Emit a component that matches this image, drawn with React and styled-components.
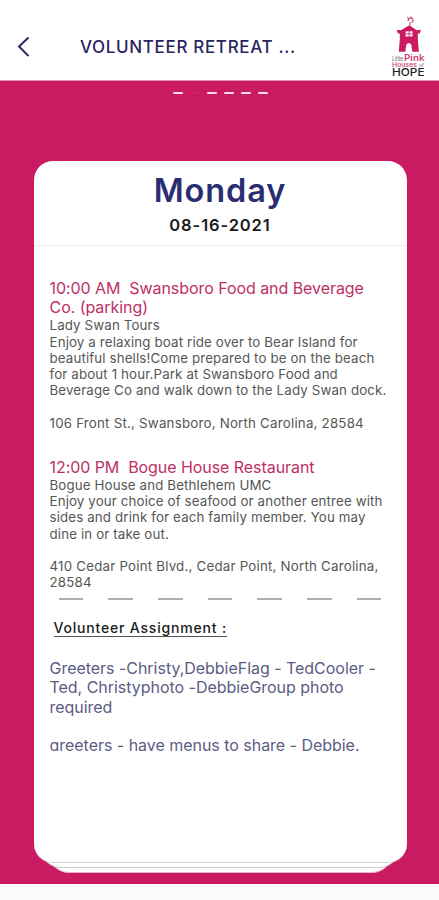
import React from "react";
import styled, { createGlobalStyle } from "styled-components";

const GlobalStyle = createGlobalStyle`
  * { box-sizing: border-box; }
  body { margin: 0; background: #fbfbfb; font-family: Inter, "Liberation Sans", sans-serif; }
`;

const Screen = styled.div`
  width: 439px;
  height: 900px;
  display: flex;
  flex-direction: column;
  overflow: hidden;
  background: #fbfbfb;
`;

const Header = styled.header`
  flex: none;
  height: 81px;
  display: flex;
  align-items: flex-start;
  background: #fff;
  border-bottom: 1px solid #d79bb4;
`;

const BackButton = styled.button`
  flex: none;
  width: 80px;
  height: 30px;
  margin-top: 32px;
  padding: 0 0 0 17px;
  border: 0;
  background: none;
  text-align: left;
  svg { display: block; }
`;

const Title = styled.h1`
  flex: 1;
  margin: 36px 0 0;
  font-size: 17px;
  line-height: 22px;
  font-weight: 500;
  letter-spacing: 0.66px;
  color: #29265f;
  white-space: nowrap;
`;

const Logo = styled.svg`
  flex: none;
  width: 37px;
  height: 64px;
  margin: 14px 10px 0 0;
`;

const Stage = styled.main`
  flex: none;
  height: 803px;
  display: flex;
  flex-direction: column;
  align-items: center;
  background: #ca1b62;
`;

const Pager = styled.div`
  display: flex;
  gap: 7px;
  height: 80px;
  padding: 11px 0 0 1px;
`;

const Dash = styled.span`
  width: 10px;
  height: 2px;
  border-radius: 1px;
  background: ${(p) => (p.$active ? "#cf2364" : "#fbdbe9")};
`;

const Stack = styled.div`
  position: relative;
  z-index: 0;
  width: 373px;
  height: 701px;
  margin-left: 1px;
`;

const Sheet = styled.div`
  position: absolute;
  z-index: ${(p) => -p.$depth};
  left: ${(p) => p.$depth * 7.5}px;
  right: ${(p) => p.$depth * 7.5}px;
  bottom: ${(p) => p.$depth * -5.5}px;
  height: 100px;
  border-radius: 20px;
  background: #fff;
  border-bottom: 1px solid ${(p) => (p.$depth === 2 ? "#eab6cb" : "#d2cccf")};
`;

const Card = styled.article`
  height: 702px;
  border-radius: 19px;
  background: #fff;
  border-bottom: 1px solid #d2d2d2;
`;

const CardHead = styled.div`
  height: 85px;
  padding-top: 10px;
  border-bottom: 1px solid #ececec;
  text-align: center;
`;

const Day = styled.h2`
  margin: 0;
  font-size: 32.5px;
  line-height: 40px;
  font-weight: 600;
  letter-spacing: 0.9px;
  color: #2b2d72;
`;

const DateText = styled.div`
  margin-top: 4px;
  font-size: 16.5px;
  line-height: 20px;
  font-weight: 600;
  letter-spacing: 0.9px;
  color: #1b1b1b;
`;

const Body = styled.div`
  height: 505px;
  padding: 33px 0 0 16px;
  overflow: hidden;
  white-space: pre;
`;

const Event = styled.section`
  margin-bottom: ${(p) => p.$gap}px;
`;

const EventTitle = styled.h3`
  margin: 0;
  font-size: 16px;
  line-height: 19.2px;
  font-weight: 400;
  letter-spacing: -0.06px;
  color: #be2f66;
`;

const Details = styled.p`
  margin: 0;
  font-size: 13.3px;
  line-height: 16.2px;
  letter-spacing: 0.14px;
  color: #565656;
`;

const Address = styled(Details)`
  margin-top: 16.2px;
  letter-spacing: 0.22px;
`;

const Divider = styled.div`
  display: flex;
  gap: 25px;
  padding-left: 9px;
  span { width: 24.7px; height: 2px; background: #adadad; }
`;

const AssignmentTitle = styled.h4`
  width: max-content;
  margin: 19.5px 0 0 4px;
  font-size: 14px;
  line-height: 17px;
  font-weight: 500;
  letter-spacing: 0.81px;
  color: #202020;
  border-bottom: 1px solid #555;
`;

const Assignment = styled.p`
  margin: 21.5px 0 0;
  font-size: 16px;
  line-height: 19.3px;
  letter-spacing: -0.03px;
  color: #5c5c83;
`;

function HouseLogo() {
  return (
    <Logo viewBox="0 0 37 64" aria-label="Little Pink Houses of Hope">
      <g transform="translate(.4 0) scale(1.06 1.02)">
        <path d="M14 3l2 2m1-2.5l2 2m-4 2.500a2.300 2.300 0 1 1 3 1.500M16.500 8v3" fill="none" stroke="#c74b7c" strokeWidth="1.1" />
        <path d="M16 11L8 16l-4-.5 1.300 3.500h1.700V25l-1 12h6.200l1-7q2.300-3 4.600 0l1 7h6.200l-1-12v-6h1.700L27 15.500l-4 .5z" fill="#ca1b62" />
        <path d="M12.500 17h6.500v5h-6.500z" fill="#fff" />
        <path d="M15.750 17v5m-3.250-2.500h6.500" stroke="#ca1b62" strokeWidth=".8" />
      </g>
      <text x="0" y="47" fontSize="5.500" textLength="11" lengthAdjust="spacingAndGlyphs" fill="#666">Little</text>
      <text x="12" y="47" fontSize="8.500" fontWeight="600" textLength="20.500" lengthAdjust="spacingAndGlyphs" fill="#cf4077">Pink</text>
      <text x="0" y="52.500" fontSize="6" fontWeight="500" textLength="25" lengthAdjust="spacingAndGlyphs" fill="#c83b72">Houses</text>
      <text x="27" y="52.500" fontSize="4.500" textLength="5" lengthAdjust="spacingAndGlyphs" fill="#777">of</text>
      <text x="0" y="61.800" fontSize="11" fontWeight="500" textLength="32.500" lengthAdjust="spacingAndGlyphs" fill="#202020">HOPE</text>
    </Logo>
  );
}

const pages = [0, 1, 2, 3, 4, 5];
const dashes = [0, 1, 2, 3, 4, 5, 6];

export default function App() {
  return (
    <>
      <GlobalStyle />
      <Screen>
        <Header>
          <BackButton aria-label="Back">
            <svg width="16" height="30" viewBox="0 0 16 30">
              <path d="M11.500 5.500L2 14.500l9.500 9.500" fill="none" stroke="#2d2963" strokeWidth="2" />
            </svg>
          </BackButton>
          <Title>VOLUNTEER RETREAT ...</Title>
          <HouseLogo />
        </Header>
        <Stage>
          <Pager>{pages.map((n) => <Dash key={n} $active={n === 1} />)}</Pager>
          <Stack>
            <Sheet $depth={2} />
            <Sheet $depth={1} />
            <Card>
              <CardHead>
                <Day>Monday</Day>
                <DateText>08-16-2021</DateText>
              </CardHead>
              <Body>
                <Event $gap={27}>
                  <EventTitle>{"10:00 AM  Swansboro Food and Beverage\nCo. (parking)"}</EventTitle>
                  <Details>{"Lady Swan Tours\nEnjoy a relaxing boat ride over to Bear Island for\nbeautiful shells!Come prepared to be on the beach\nfor about 1 hour.Park at Swansboro Food and\nBeverage Co and walk down to the Lady Swan dock."}</Details>
                  <Address>106 Front St., Swansboro, North Carolina, 28584</Address>
                </Event>
                <Event $gap={7.5}>
                  <EventTitle>{"12:00 PM  Bogue House Restaurant"}</EventTitle>
                  <Details>{"Bogue House and Bethlehem UMC\nEnjoy your choice of seafood or another entree with\nsides and drink for each family member. You may\ndine in or take out."}</Details>
                  <Address>{"410 Cedar Point Blvd., Cedar Point, North Carolina,\n28584"}</Address>
                </Event>
                <Divider>{dashes.map((n) => <span key={n} />)}</Divider>
                <AssignmentTitle>Volunteer Assignment :</AssignmentTitle>
                <Assignment>{"Greeters -Christy,DebbieFlag - TedCooler -\nTed, Christyphoto -DebbieGroup photo\nrequired\n\ngreeters - have menus to share - Debbie."}</Assignment>
              </Body>
            </Card>
          </Stack>
        </Stage>
      </Screen>
    </>
  );
}
